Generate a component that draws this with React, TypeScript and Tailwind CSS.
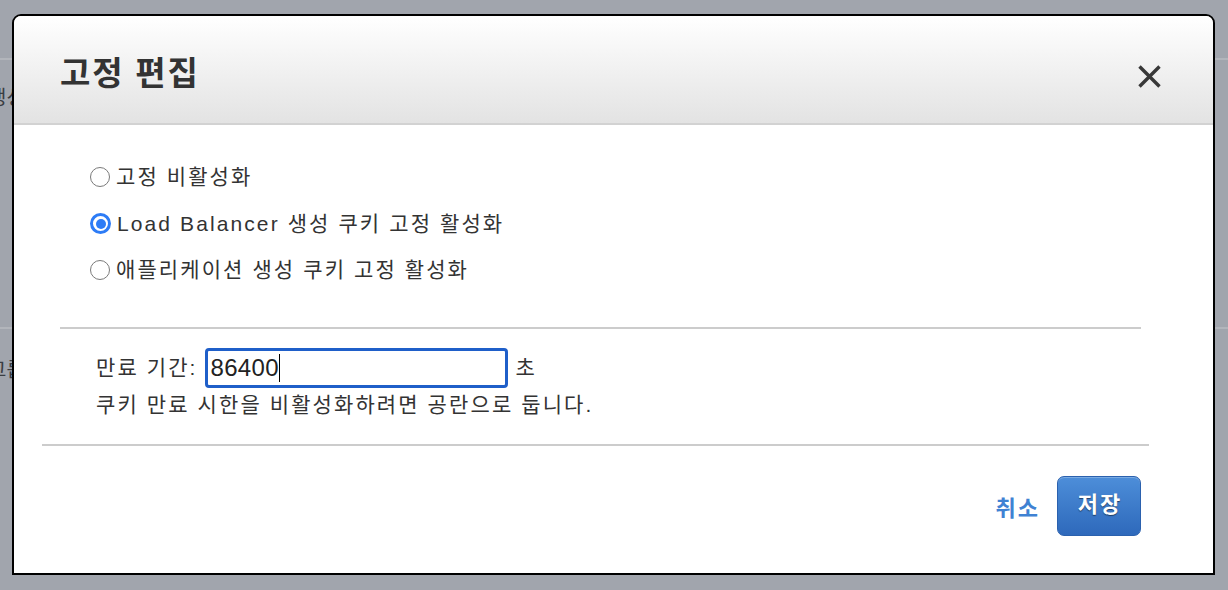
import React from "react";

const FONT = '"Liberation Sans", "Noto Sans CJK KR", sans-serif';

function Radio({ checked }: { checked?: boolean }) {
  if (checked) {
    return (
      <div className="w-[21px] h-[21px] rounded-full border-[3px] border-[#2d7cf6] bg-white flex items-center justify-center shrink-0">
        <div className="w-[10px] h-[10px] rounded-full bg-[#2d7cf6]" />
      </div>
    );
  }
  return <div className="w-[20px] h-[20px] rounded-full border border-[#7a7a7a] bg-white shrink-0" />;
}

export default function App() {
  return (
    <div
      className="relative w-[1228px] h-[590px] bg-[#a1a5ad] overflow-hidden text-[#333]"
      style={{ fontFamily: FONT }}
    >
      {/* underlying page (dimmed) */}
      <div className="flex flex-col">
        <div className="h-[58px]" />
        <div className="h-[2px] bg-[#b2b5bb]" />
        <div className="h-[27px]" />
        <div className="text-[20px] leading-[22px] text-[#3a3d42] ml-[-12px]">생성</div>
        <div className="h-[218px]" />
        <div className="h-[2px] bg-[#b2b5bb]" />
        <div className="h-[30px]" />
        <div className="text-[20px] leading-[22px] text-[#3a3d42] ml-[-12px]">그룹</div>
      </div>

      {/* modal */}
      <div className="absolute left-[12px] top-[14px] w-[1203px] h-[561px] border-2 border-black rounded-t-[9px] bg-white flex flex-col overflow-hidden">
        <div className="h-[109px] shrink-0 bg-gradient-to-b from-[#ffffff] to-[#e3e3e3] border-b-2 border-[#d2d2d2] flex items-center justify-between pl-[46px] pr-[51px]">
          <div className="text-[33px] font-bold text-[#333] pt-[8px] tracking-[1.8px]">고정 편집</div>
          <svg width="25" height="25" viewBox="0 0 25 25" className="mt-[13px]">
            <path d="M2.5 2.5 L22.5 22.5 M22.5 2.5 L2.5 22.5" stroke="#383838" strokeWidth="3.4" strokeLinecap="butt" />
          </svg>
        </div>

        <div className="flex flex-col pt-[29px] pl-[76px] text-[21px] tracking-[2.1px] text-[#333]">
          <div className="h-[46px] flex items-center gap-[6px]">
            <Radio />
            <span>고정 비활성화</span>
          </div>
          <div className="h-[47px] flex items-center gap-[6px]">
            <Radio checked />
            <span>Load Balancer 생성 쿠키 고정 활성화</span>
          </div>
          <div className="h-[46px] flex items-center gap-[6px]">
            <Radio />
            <span>애플리케이션 생성 쿠키 고정 활성화</span>
          </div>
        </div>

        <div className="mt-[34px] ml-[46px] mr-[72px] h-[2px] bg-[#cccccc]" />

        <div className="mt-[19px] pl-[82px] flex flex-col text-[21px] tracking-[2.1px] text-[#333]">
          <div className="flex items-center h-[40px]">
            <span>만료 기간:</span>
            <div className="ml-[7px] w-[303px] h-[40px] border-[3px] border-[#1f5fc9] rounded-[4px] flex items-center pl-[3px] tracking-[0.3px]">
              <span className="text-[24px] text-[#222]">86400</span>
              <div className="w-[1px] h-[28px] bg-black" />
            </div>
            <span className="ml-[8px]">초</span>
          </div>
          <div className="mt-[5px] leading-[24px]">쿠키 만료 시한을 비활성화하려면 공란으로 둡니다.</div>
        </div>

        <div className="mt-[27px] ml-[28px] mr-[64px] h-[2px] bg-[#cccccc]" />

        <div className="mt-[30px] mr-[72px] flex items-center justify-end">
          <span className="text-[22px] font-bold text-[#3f82d3] mt-[4px] tracking-[2px]">취소</span>
          <div className="ml-[17px] w-[84px] h-[60px] rounded-[7px] border border-[#2b61ae] bg-gradient-to-b from-[#4d8ed9] to-[#2e69bb] flex items-center justify-center shadow-[inset_0_1px_0_rgba(255,255,255,0.25)]">
            <span className="text-[22px] font-bold text-white mb-[4px] tracking-[2px] pl-[2px] [text-shadow:0_1px_1px_rgba(0,0,0,0.5)]">저장</span>
          </div>
        </div>
      </div>
    </div>
  );
}
